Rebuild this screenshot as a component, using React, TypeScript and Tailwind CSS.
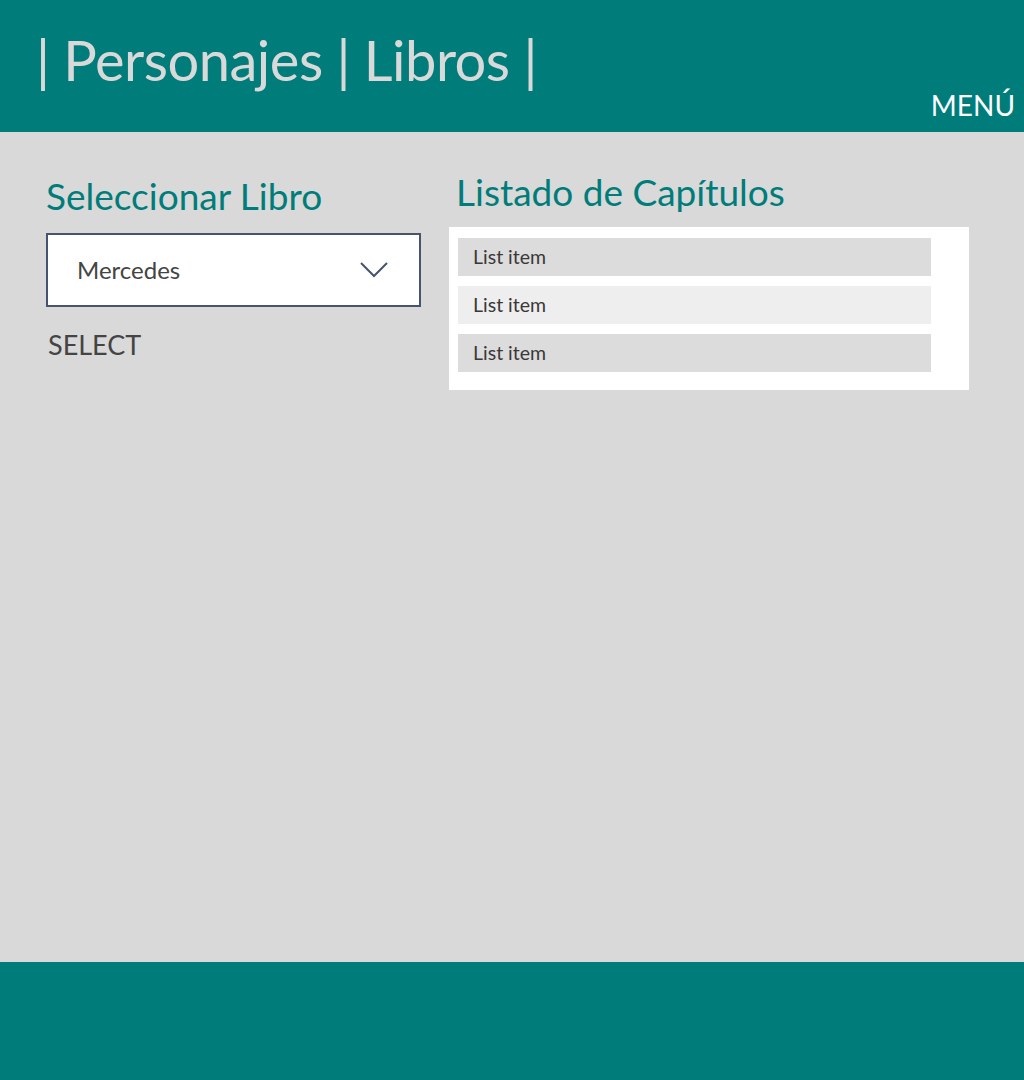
import React from 'react';

const items = [
  { label: 'List item', bg: 'bg-[#dcdcdc]' },
  { label: 'List item', bg: 'bg-[#eeeeee]' },
  { label: 'List item', bg: 'bg-[#dcdcdc]' },
];

function App() {
  return (
    <div className="flex min-h-[1080px] flex-col bg-[#d9d9d9] font-['Lato',sans-serif]">
      {/* Header */}
      <header className="relative h-[132px] bg-[#007d7a]">
        <h1 className="pl-[36px] pt-[22px] text-[56px] leading-[76px] font-normal tracking-[-0.5px] text-[#d9d9d9]">
          | Personajes | Libros |
        </h1>
        <span className="absolute right-[9px] top-[87px] text-[28px] leading-[36px] text-white">MENÚ</span>
      </header>

      <main className="flex flex-1 gap-[28px] pt-[36px]">
        {/* Left column */}
        <section className="ml-[46px] w-[375px]">
          <h2 className="mt-[4px] text-[37px] leading-[48px] text-[#007d7a]">Seleccionar Libro</h2>
          <div className="mt-[13px] flex h-[74px] items-center justify-between border-2 border-[#48546f] bg-white pl-[29px] pr-[30px]">
            <span className="text-[24px] text-[#444444]">Mercedes</span>
            <svg width="30" height="18" viewBox="0 0 30 18" fill="none">
              <path d="M2 2 L15 15 L28 2" stroke="#48546f" strokeWidth="2" />
            </svg>
          </div>
          <p className="mt-[21px] pl-[2px] text-[27px] leading-[34px] text-[#444444]">SELECT</p>
        </section>

        {/* Right column */}
        <section className="w-[520px]">
          <h2 className="pl-[7px] text-[37px] leading-[48px] text-[#007d7a]">Listado de Capítulos</h2>
          <div className="mt-[11px] flex flex-col gap-[10px] bg-white pb-[18px] pl-[9px] pr-[38px] pt-[11px]">
            {items.map((it, i) => (
              <div key={i} className={`flex h-[38px] items-center pl-[15px] text-[19.5px] text-[#3b3838] ${it.bg}`}>
                {it.label}
              </div>
            ))}
          </div>
        </section>
      </main>

      {/* Footer */}
      <footer className="h-[118px] bg-[#007d7a]" />
    </div>
  );
}

export default App;
